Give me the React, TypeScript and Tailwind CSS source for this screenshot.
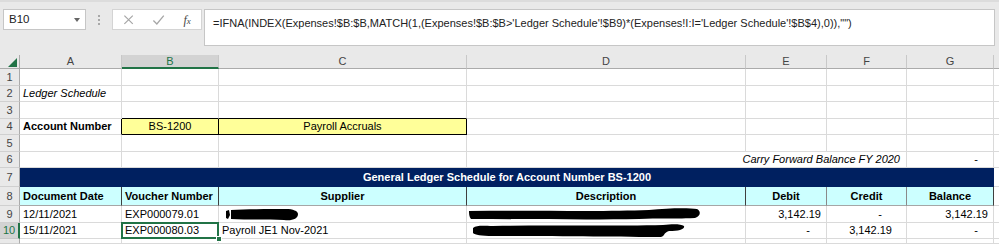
import React from "react";

const FORMULA =
  "=IFNA(INDEX(Expenses!$B:$B,MATCH(1,(Expenses!$B:$B>'Ledger Schedule'!$B9)*(Expenses!I:I='Ledger Schedule'!$B$4),0)),\"\")";

const grid = "border-r border-b border-[#dadada]";
const cellBase = "flex items-center overflow-hidden whitespace-nowrap px-[3px] text-[11px] leading-none text-black";

function C({ className = "", children }: { className?: string; children?: React.ReactNode }) {
  return <div className={`${cellBase} ${className}`}>{children}</div>;
}

function RowHead({ n, selected = false }: { n?: number; selected?: boolean }) {
  return (
    <div
      className={
        selected
          ? "flex items-center justify-center bg-[#d3d3d3] border-b border-[#c6c6c6] border-r-2 border-r-[#217346] text-[11px] leading-none text-[#217346]"
          : "flex items-center justify-center bg-[#e9e9e9] border-b border-[#d0d0d0] border-r border-r-[#ababab] text-[11px] leading-none text-[#444]"
      }
    >
      {n}
    </div>
  );
}

function Blob({ d, w, h }: { d: string; w: number; h: number }) {
  return (
    <svg width={w} height={h} viewBox={`0 0 ${w} ${h}`} className="absolute left-0 top-0">
      <path d={d} fill="#000" />
    </svg>
  );
}

function FormulaBar() {
  return (
    <div className="flex items-start h-[55px] pt-[7px] border-t-[2px] border-[#dcdcdc]">
      <div className="ml-[3px] w-[83px] h-[21px] bg-white border border-[#c6c6c6] flex items-center pl-[5px] pr-[5px] justify-between">
        <span className="text-[11.5px] text-[#222]">B10</span>
        <span className="w-0 h-0 border-l-[3px] border-r-[3px] border-t-[4px] border-l-transparent border-r-transparent border-t-[#666]" />
      </div>
      <div className="w-[26px] h-[21px] flex flex-col items-center justify-center gap-[2px]">
        <span className="w-[2px] h-[2px] bg-[#a8a8a8]" />
        <span className="w-[2px] h-[2px] bg-[#a8a8a8]" />
        <span className="w-[2px] h-[2px] bg-[#a8a8a8]" />
      </div>
      <div className="w-[90px] h-[21px] bg-white border border-[#d4d4d4] flex items-center">
        <svg width="30" height="19" viewBox="0 0 30 19" className="ml-[1px]">
          <path d="M10.5 5.5 L19 14 M19 5.5 L10.5 14" stroke="#a6a6a6" strokeWidth="1.2" />
        </svg>
        <svg width="30" height="19" viewBox="0 0 30 19">
          <path d="M9.5 10.5 L13 14 L20 5.5" stroke="#a6a6a6" strokeWidth="1.3" fill="none" />
        </svg>
        <span className="w-[28px] text-center text-[12px] italic text-[#444] font-['Liberation_Serif',serif]">
          f<span className="text-[9px]">x</span>
        </span>
      </div>
      <div className="ml-[2px] w-[791px] h-[37px] bg-white border border-[#c6c6c6] pl-[8px] pt-[5px] text-[11px] text-[#222] whitespace-nowrap">
        {FORMULA}
      </div>
    </div>
  );
}

export default function App() {
  const colHead = "flex items-center justify-center bg-[#e9e9e9] border-r border-[#c8c8c8] border-b border-b-[#ababab] text-[11px] leading-none text-[#444]";
  const hdr8 = "bg-[#ccffff] border-b border-[#a6a6a6] font-bold";
  return (
    <div className="w-[999px] h-[244px] overflow-hidden bg-[#e9e9e9] font-['Liberation_Sans',sans-serif]">
      <FormulaBar />
      <div className="grid grid-cols-[20px_102px_97px_248px_279px_81px_80px_87px_1fr] grid-rows-[14px_17px_16px_17px_16px_17px_16px_19px_19px_17px_16px_1fr] h-[189px] bg-white">
        {/* column headers */}
        <div className="relative bg-[#e9e9e9] border-r border-[#ababab] border-b border-b-[#ababab]">
          <svg width="9" height="9" viewBox="0 0 9 9" className="absolute left-[8px] top-[3px]">
            <path d="M9 0 L9 9 L0 9 Z" fill="#217346" />
          </svg>
        </div>
        <div className={colHead}>A</div>
        <div className="flex items-center justify-center bg-[#d3d3d3] border-r border-[#c8c8c8] border-b-2 border-b-[#217346] text-[11px] leading-none text-[#217346]">B</div>
        <div className={colHead}>C</div>
        <div className={colHead}>D</div>
        <div className={colHead}>E</div>
        <div className={colHead}>F</div>
        <div className={colHead}>G</div>
        <div className="bg-[#e9e9e9] border-b border-[#ababab]" />

        {/* row 1 */}
        <RowHead n={1} />
        <C className={grid} /><C className={grid} /><C className={grid} /><C className={grid} />
        <C className={grid} /><C className={grid} /><C className={grid} /><C className="border-b border-[#dadada]" />

        {/* row 2 */}
        <RowHead n={2} />
        <C className={`${grid} italic`}>Ledger Schedule</C>
        <C className={grid} /><C className={grid} /><C className={grid} />
        <C className={grid} /><C className={grid} /><C className={grid} /><C className="border-b border-[#dadada]" />

        {/* row 3 */}
        <RowHead n={3} />
        <C className={grid} />
        <C className="border-r border-[#dadada] border-b border-b-black" />
        <C className="border-r border-[#dadada] border-b border-b-black" />
        <C className={grid} />
        <C className={grid} /><C className={grid} /><C className={grid} /><C className="border-b border-[#dadada]" />

        {/* row 4 */}
        <RowHead n={4} />
        <C className="border-r border-r-black border-b border-b-[#dadada] font-bold">Account Number</C>
        <C className="border-r border-b border-black bg-[#ffff99] justify-center">BS-1200</C>
        <C className="border-r border-b border-black bg-[#ffff99] justify-center">Payroll Accruals</C>
        <C className={grid} />
        <C className={grid} /><C className={grid} /><C className={grid} /><C className="border-b border-[#dadada]" />

        {/* row 5 */}
        <RowHead n={5} />
        <C className={grid} /><C className={grid} /><C className={grid} /><C className={grid} />
        <C className={grid} /><C className={grid} /><C className={grid} /><C className="border-b border-[#dadada]" />

        {/* row 6 */}
        <RowHead n={6} />
        <C className={grid} /><C className={grid} /><C className={grid} />
        <C className={`${grid} col-span-3 justify-end italic pr-[6px]`}>Carry Forward Balance FY 2020</C>
        <C className={`${grid} justify-end pr-[15px]`}>-</C>
        <C className="border-b border-[#dadada]" />

        {/* row 7 */}
        <RowHead n={7} />
        <div className="col-span-7 flex items-center justify-center bg-[#002060] border-b border-[#002060] text-[11px] font-bold text-white whitespace-nowrap">
          General Ledger Schedule for Account Number BS-1200
        </div>
        <C className="border-b border-[#dadada]" />

        {/* row 8 */}
        <RowHead n={8} />
        <C className={`${hdr8} border-r border-r-[#3f3f3f]`}>Document Date</C>
        <C className={`${hdr8} border-r border-r-[#3f3f3f]`}>Voucher Number</C>
        <C className={`${hdr8} border-r border-r-[#3f3f3f] justify-center`}>Supplier</C>
        <C className={`${hdr8} border-r border-r-[#3f3f3f] justify-center`}>Description</C>
        <C className={`${hdr8} border-r border-r-[#8a8a8a] justify-center`}>Debit</C>
        <C className={`${hdr8} border-r border-r-[#8a8a8a] justify-center`}>Credit</C>
        <C className={`${hdr8} border-r border-r-[#3f3f3f] justify-center`}>Balance</C>
        <C className="border-b border-[#dadada]" />

        {/* row 9 */}
        <RowHead n={9} />
        <C className={grid}>12/11/2021</C>
        <C className={grid}>EXP000079.01</C>
        <C className={`${grid} relative`}>
          <div className="absolute left-[7px] top-[3px]">
            <Blob w={72} h={12} d="M0 2 L3 1 L4 6 L2 10 L0 9 Z M5 1 C20 0 40 0 60 0 C67 0 72 2 72 5 C72 10 66 12 58 11 C40 10 22 11 5 10 Z" />
          </div>
        </C>
        <C className={`${grid} relative`}>
          <div className="absolute left-[2px] top-[2px]">
            <Blob w={232} h={13} d="M0 3 C60 2 130 4 180 2 C200 0 220 0 228 1 C232 3 232 8 226 10 C200 11 190 10 170 11 C120 12 60 11 2 11 C0 9 0 5 0 3 Z" />
          </div>
        </C>
        <C className={`${grid} justify-end pr-[5px]`}>3,142.19</C>
        <C className={`${grid} justify-end pr-[24px]`}>-</C>
        <C className={`${grid} justify-end pr-[5px]`}>3,142.19</C>
        <C className="border-b border-[#dadada]" />

        {/* row 10 */}
        <RowHead n={10} selected />
        <C className={grid}>15/11/2021</C>
        <C className={`${grid} relative overflow-visible`}>
          EXP000080.03
          <div className="absolute -left-px -top-px right-[-1px] bottom-[-1px] border-2 border-[#217346]" />
          <div className="absolute right-[-4px] bottom-[-4px] w-[6px] h-[6px] bg-[#217346] border border-white" />
        </C>
        <C className={grid}>Payroll JE1 Nov-2021</C>
        <C className={`${grid} relative`}>
          <div className="absolute left-[6px] top-[1px]">
            <Blob w={212} h={14} d="M0 4 C4 1 10 2 20 2 C80 1 150 2 190 1 C200 0 208 0 211 2 C212 5 206 7 196 7 C190 9 192 12 188 13 C150 13 80 12 20 12 C8 12 2 11 0 9 Z" />
          </div>
        </C>
        <C className={`${grid} justify-end pr-[16px]`}>-</C>
        <C className={`${grid} justify-end pr-[14px]`}>3,142.19</C>
        <C className={`${grid} justify-end pr-[15px]`}>-</C>
        <C className="border-b border-[#dadada]" />

        {/* row 11, only its top edge shows */}
        <RowHead />
        <C className={grid} /><C className={grid} /><C className={grid} /><C className={grid} />
        <C className={grid} /><C className={grid} /><C className={grid} /><C className="border-b border-[#dadada]" />
      </div>
    </div>
  );
}
